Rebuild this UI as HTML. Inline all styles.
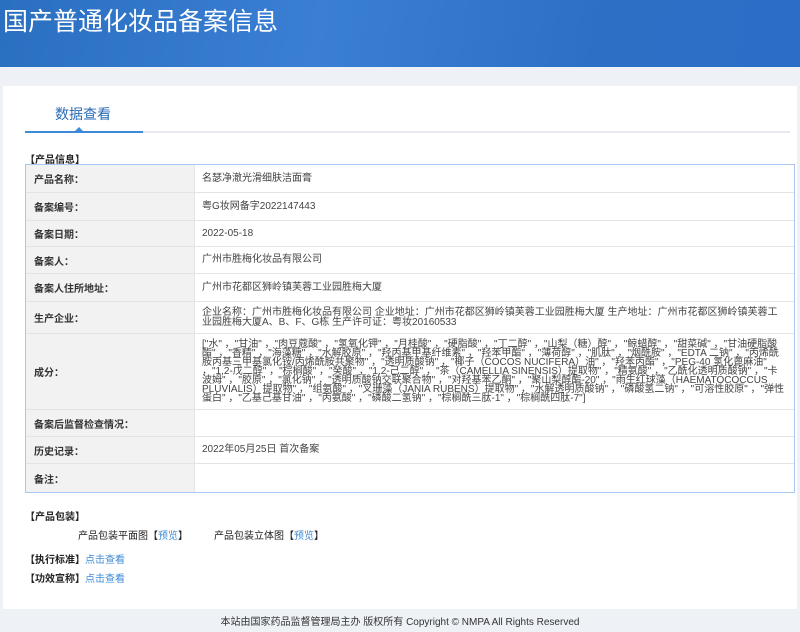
<!DOCTYPE html>
<html><head><meta charset="utf-8"><style>
*{margin:0;padding:0;box-sizing:border-box}
body{width:800px;height:632px;overflow:hidden;background:#eef2f6;font-family:"Liberation Sans","Noto Sans CJK SC",sans-serif;color:#333;position:relative}
.hdr{position:absolute;left:0;top:0;width:800px;height:67px;background:linear-gradient(100deg,#2a6fc0 0%,#3a7fd4 40%,#2c70c6 75%,#2a6ec8 100%)}
.hdr h1{position:absolute;left:3px;top:2px;font-size:25px;font-weight:normal;color:#fff}
.panel{position:absolute;left:3px;top:86px;width:794px;height:523px;background:#fff}
.a{position:absolute;white-space:nowrap}
.tab{left:55px;top:104px;font-size:14px;color:#2a6bb5}
.tl{position:absolute;left:25px;top:131px;width:765px;height:2px;background:#e6e9ee}
.tb{position:absolute;left:25px;top:131px;width:118px;height:2px;background:#3f8ad8}
.tri{position:absolute;left:75px;top:127px;width:0;height:0;border-left:4px solid transparent;border-right:4px solid transparent;border-bottom:4px solid #3f8ad8}
.b{font-weight:bold;font-size:10px;color:#222}
.tbl{position:absolute;left:25px;top:164px;width:770px;height:329px;border:1px solid #a9c7ef}
.r{position:absolute;left:0;width:768px;border-bottom:1px solid #e4e4e4}
.r .l{position:absolute;left:0;top:0;bottom:0;width:169px;background:#f2f2f2;border-right:1px solid #e4e4e4;font-size:10px;font-weight:bold;color:#333;padding-left:8px;display:flex;align-items:center}
.r .v{position:absolute;left:176px;right:8px;top:0;bottom:0;font-size:10px;color:#444;display:flex;align-items:center;line-height:9.5px}
.blue{color:#3d8ad6}
.ft{position:absolute;left:0;top:613px;width:800px;text-align:center;font-size:10px;color:#333}
</style></head><body>
<div class="hdr"><h1>国产普通化妆品备案信息</h1></div>
<div class="panel"></div>
<div class="a tab">数据查看</div>
<div class="tl"></div><div class="tb"></div><div class="tri"></div>
<div class="a b" style="left:25px;top:151px">【产品信息】</div>
<div class="tbl">
<div class="r" style="top:0;height:28px"><div class="l">产品名称：</div><div class="v" style="line-height:12px">名瑟净澈光滑细肤洁面膏</div></div>
<div class="r" style="top:28px;height:28px"><div class="l">备案编号：</div><div class="v" style="line-height:12px">粤G妆网备字2022147443</div></div>
<div class="r" style="top:56px;height:26px"><div class="l">备案日期：</div><div class="v" style="line-height:12px">2022-05-18</div></div>
<div class="r" style="top:82px;height:27px"><div class="l">备案人：</div><div class="v" style="line-height:12px">广州市胜梅化妆品有限公司</div></div>
<div class="r" style="top:109px;height:28px"><div class="l">备案人住所地址：</div><div class="v" style="line-height:12px">广州市花都区狮岭镇芙蓉工业园胜梅大厦</div></div>
<div class="r" style="top:137px;height:32px"><div class="l">生产企业：</div><div class="v">企业名称：广州市胜梅化妆品有限公司 企业地址：广州市花都区狮岭镇芙蓉工业园胜梅大厦 生产地址：广州市花都区狮岭镇芙蓉工业园胜梅大厦A、B、F、G栋 生产许可证：粤妆20160533</div></div>
<div class="r" style="top:169px;height:76px"><div class="l">成分：</div><div class="v" style="font-size:10px;line-height:9px">["水" ，"甘油" ，"肉豆蔻酸" ，"氢氧化钾" ，"月桂酸" ，"硬脂酸" ，"丁二醇" ，"山梨（糖）醇" ，"鲸蜡醇" ，"甜菜碱" ，"甘油硬脂酸酯" ，"香精" ，"海藻糖" ，"水解胶原" ，"羟丙基甲基纤维素" ，"羟苯甲酯" ，"薄荷醇" ，"肌肽" ，"烟酰胺" ，"EDTA 二钠" ，"丙烯酰胺丙基三甲基氯化铵/丙烯酰胺共聚物" ，"透明质酸钠" ，"椰子（COCOS NUCIFERA）油" ，"羟苯丙酯" ，"PEG-40 氢化蓖麻油" ，"1,2-戊二醇" ，"棕榈酸" ，"癸酸" ，"1,2-己二醇" ，"茶（CAMELLIA SINENSIS）提取物" ，"精氨酸" ，"乙酰化透明质酸钠" ，"卡波姆" ，"胶原" ，"氯化钠" ，"透明质酸钠交联聚合物" ，"对羟基苯乙酮" ，"聚山梨醇酯-20" ，"雨生红球藻（HAEMATOCOCCUS PLUVIALIS）提取物" ，"组氨酸" ，"叉珊藻（JANIA RUBENS）提取物" ，"水解透明质酸钠" ，"磷酸氢二钠" ，"可溶性胶原" ，"弹性蛋白" ，"乙基己基甘油" ，"丙氨酸" ，"磷酸二氢钠" ，"棕榈酰三肽-1" ，"棕榈酰四肽-7"]</div></div>
<div class="r" style="top:245px;height:27px"><div class="l">备案后监督检查情况：</div><div class="v"></div></div>
<div class="r" style="top:272px;height:27px"><div class="l">历史记录：</div><div class="v" style="line-height:12px">2022年05月25日 首次备案</div></div>
<div class="r" style="top:299px;height:28px;border-bottom:none"><div class="l">备注：</div><div class="v"></div></div>
</div>
<div class="a b" style="left:25px;top:508px">【产品包装】</div>
<div class="a" style="left:78px;top:527px;font-size:10px;color:#222">产品包装平面图【<span class="blue">预览</span>】</div>
<div class="a" style="left:214px;top:527px;font-size:10px;color:#222">产品包装立体图【<span class="blue">预览</span>】</div>
<div class="a b" style="left:25px;top:551px">【执行标准】<span class="blue" style="font-weight:normal">点击查看</span></div>
<div class="a b" style="left:25px;top:570px">【功效宣称】<span class="blue" style="font-weight:normal">点击查看</span></div>
<div class="ft">本站由国家药品监督管理局主办 版权所有 Copyright © NMPA All Rights Reserved</div>
</body></html>
